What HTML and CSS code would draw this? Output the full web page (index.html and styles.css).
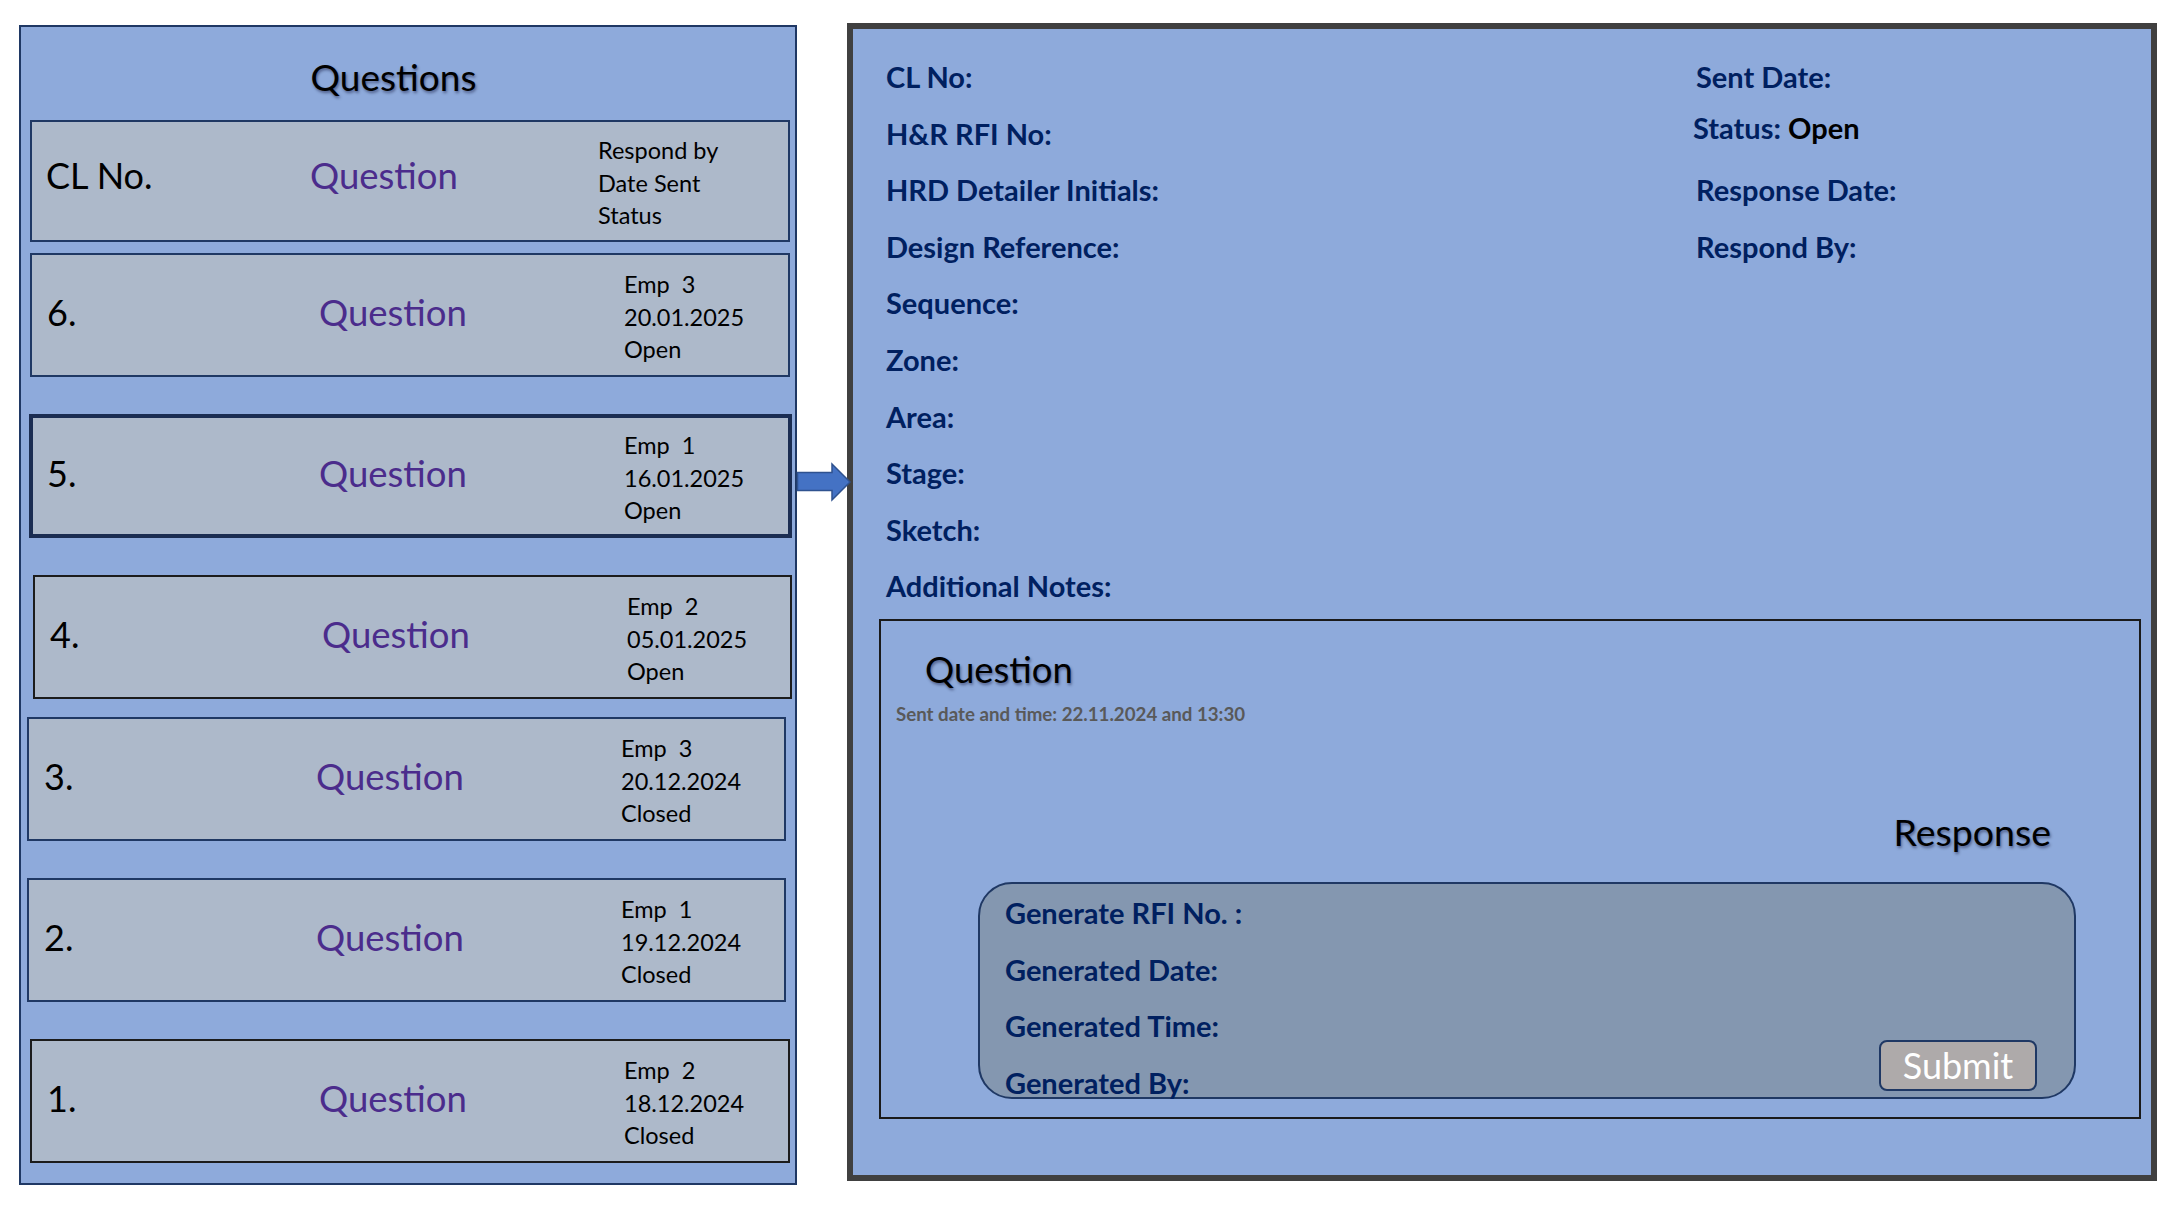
FILE: index.html
```html
<!DOCTYPE html>
<html lang="en">
<head>
<meta charset="utf-8">
<title>Questions</title>
<link rel="stylesheet" href="styles.css">
</head>
<body>
<div class="page">
  <section class="list-panel">
    <h1 class="list-title">Questions</h1>

    <div class="row row--header">
      <div class="row-num">CL No.</div>
      <div class="row-q">Question</div>
      <div class="row-meta"><span>Respond by</span><span>Date Sent</span><span>Status</span></div>
    </div>

    <div class="row row--first">
      <div class="row-num">6.</div>
      <div class="row-q">Question</div>
      <div class="row-meta"><span>Emp  3</span><span>20.01.2025</span><span>Open</span></div>
    </div>

    <div class="row row--selected">
      <div class="row-num">5.</div>
      <div class="row-q">Question</div>
      <div class="row-meta"><span>Emp  1</span><span>16.01.2025</span><span>Open</span></div>
    </div>

    <div class="row row--right row--dark">
      <div class="row-num">4.</div>
      <div class="row-q">Question</div>
      <div class="row-meta"><span>Emp  2</span><span>05.01.2025</span><span>Open</span></div>
    </div>

    <div class="row row--left row--tight">
      <div class="row-num">3.</div>
      <div class="row-q">Question</div>
      <div class="row-meta"><span>Emp  3</span><span>20.12.2024</span><span>Closed</span></div>
    </div>

    <div class="row row--left">
      <div class="row-num">2.</div>
      <div class="row-q">Question</div>
      <div class="row-meta"><span>Emp  1</span><span>19.12.2024</span><span>Closed</span></div>
    </div>

    <div class="row row--dark">
      <div class="row-num">1.</div>
      <div class="row-q">Question</div>
      <div class="row-meta"><span>Emp  2</span><span>18.12.2024</span><span>Closed</span></div>
    </div>
  </section>

  <div class="connector">
    <svg class="arrow" width="54" height="38" viewBox="0 0 54 38" aria-hidden="true">
      <polygon points="0.5,9.5 35,9.5 35,1 53,19 35,37 35,27.5 0.5,27.5" fill="#4472c4" stroke="#2f528f" stroke-width="1.5" stroke-linejoin="miter"/>
    </svg>
  </div>

  <section class="detail-panel">
    <div class="fields">
      <ul class="field-list">
        <li class="field">CL No:</li>
        <li class="field">H&amp;R RFI No:</li>
        <li class="field">HRD Detailer Initials:</li>
        <li class="field">Design Reference:</li>
        <li class="field">Sequence:</li>
        <li class="field">Zone:</li>
        <li class="field">Area:</li>
        <li class="field">Stage:</li>
        <li class="field">Sketch:</li>
        <li class="field">Additional Notes:</li>
      </ul>
      <ul class="field-list">
        <li class="field">Sent Date:</li>
        <li class="field field--status">Status: <span class="field-value">Open</span></li>
        <li class="field">Response Date:</li>
        <li class="field">Respond By:</li>
      </ul>
    </div>

    <div class="qbox">
      <h2 class="q-title">Question</h2>
      <p class="q-sent">Sent date and time: 22.11.2024 and 13:30</p>
      <h2 class="q-response">Response</h2>
      <div class="resp-box">
        <ul class="field-list">
          <li class="field">Generate RFI No. :</li>
          <li class="field">Generated Date:</li>
          <li class="field">Generated Time:</li>
          <li class="field">Generated By:</li>
        </ul>
        <button class="submit" type="button">Submit</button>
      </div>
    </div>
  </section>
</div>
</body>
</html>
```

FILE: styles.css
```css
* {
  box-sizing: border-box;
}

html,
body {
  margin: 0;
  padding: 0;
  background: #ffffff;
}

body {
  font-family: Lato, "Open Sans", "DejaVu Sans", sans-serif;
  color: #000000;
}

.page {
  display: flex;
  align-items: flex-start;
  width: 2160px;
  height: 1215px;
  padding: 23px 0 0 19px;
}

/* ---------- left list panel ---------- */

.list-panel {
  flex: 0 0 778px;
  height: 1160px;
  margin-top: 2px;
  background: #8eaadb;
  border: 2px solid #1f3864;
  display: flex;
  flex-direction: column;
}

.list-title {
  margin: 0;
  height: 93px;
  padding: 6px 29px 0 0;
  display: flex;
  align-items: center;
  justify-content: center;
  font-size: 37px;
  font-weight: 400;
  color: #000000;
  text-shadow: 1px 2px 3px rgba(0, 0, 40, 0.45);
}

.row {
  display: grid;
  grid-template-columns: 272px 305px 1fr;
  align-items: center;
  width: 760px;
  height: 124px;
  margin: 37px 0 0 9px;
  padding-left: 15px;
  background: #adb9ca;
  border: 2px solid #1f3864;
}

.row--header {
  height: 122px;
  margin-top: 0;
  padding-left: 14px;
  grid-template-columns: 264px 288px 1fr;
}

.row--first {
  margin-top: 11px;
}

.row--tight {
  margin-top: 18px;
}

.row--selected {
  width: 763px;
  margin-left: 8px;
  padding-left: 14px;
  border: 4px solid #1b2d52;
}

.row--right {
  width: 759px;
  margin-left: 12px;
}

.row--left {
  width: 759px;
  margin-left: 6px;
}

.row--dark {
  border-color: #1c1c1c;
}

.row-num {
  margin-bottom: 7px;
  font-size: 36px;
  color: #000000;
}

.row-q {
  margin-bottom: 7px;
  font-size: 36.5px;
  color: #4b2c8c;
}

.row--header .row-num,
.row--header .row-q {
  margin-bottom: 13px;
}

.row-meta {
  display: flex;
  flex-direction: column;
  padding-top: 4px;
  font-size: 23.5px;
  line-height: 32.5px;
  white-space: pre;
  color: #000000;
}

/* ---------- connector arrow ---------- */

.connector {
  flex: 0 0 50px;
  width: 50px;
  min-width: 0;
  height: 38px;
  margin-top: 440px;
  overflow: visible;
}

.arrow {
  display: block;
  position: relative;
  z-index: 2;
  overflow: visible;
}

/* ---------- right detail panel ---------- */

.detail-panel {
  flex: 0 0 1310px;
  height: 1158px;
  background: #8eaadb;
  border: 6px solid #404040;
  padding-top: 20px;
}

.fields {
  display: grid;
  grid-template-columns: 810px 1fr;
  padding-left: 33px;
}

.field-list {
  list-style: none;
  margin: 0;
  padding: 0;
}

.field {
  font-size: 29px;
  font-weight: 700;
  line-height: 56.6px;
  color: #002060;
  white-space: nowrap;
}

.field--status {
  line-height: 43px;
  padding-bottom: 13.6px;
  margin-left: -3px;
}

.field-value {
  color: #000000;
}

.qbox {
  width: 1262px;
  height: 500px;
  margin: 4px 0 0 26px;
  border: 2px solid #1a1a1a;
}

.q-title {
  margin: 23px 0 0 44px;
  font-size: 36.5px;
  font-weight: 400;
  line-height: 50px;
  color: #000000;
  text-shadow: 1px 2px 3px rgba(0, 0, 40, 0.45);
}

.q-sent {
  margin: 8px 0 0 15px;
  font-size: 18.7px;
  font-weight: 700;
  line-height: 24px;
  color: #595959;
}

.q-response {
  margin: 81px 0 0 0;
  padding-right: 88px;
  text-align: right;
  font-size: 37.5px;
  font-weight: 400;
  line-height: 50px;
  color: #000000;
  text-shadow: 1px 2px 3px rgba(0, 0, 40, 0.45);
}

.resp-box {
  display: flex;
  justify-content: space-between;
  height: 217px;
  margin: 25px 63px 0 97px;
  padding: 1px 37px 6px 25px;
  background: #8497b0;
  border: 2px solid #1f3864;
  border-radius: 34px;
}

.submit {
  align-self: flex-end;
  width: 158px;
  height: 51px;
  padding: 0;
  background: #aeaaaa;
  border: 2px solid #1f3864;
  border-radius: 8px;
  font-family: Lato, "Open Sans", sans-serif;
  font-size: 36px;
  line-height: 45px;
  color: #ffffff;
}
```
